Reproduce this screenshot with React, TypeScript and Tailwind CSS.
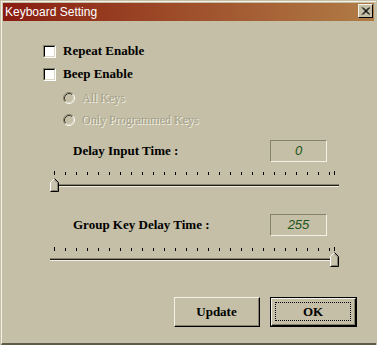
import React from "react";

const serif = "font-['Liberation_Serif','Times_New_Roman',serif]";

function CheckBox() {
  return (
    <span className="flex h-[13px] w-[13px] border border-t-[#85826e] border-l-[#85826e] border-b-white border-r-white">
      <span className="flex-1 bg-white border border-t-black border-l-black border-b-[#dcd8c4] border-r-[#dcd8c4]" />
    </span>
  );
}

function Radio() {
  return (
    <svg width="12" height="12" viewBox="0 0 12 12">
      <circle cx="6" cy="6" r="5" fill="#c4bfa6" />
      <path d="M2.11 9.89 A5.5 5.5 0 0 1 9.89 2.11" stroke="#85826e" fill="none" />
      <path d="M9.89 2.11 A5.5 5.5 0 0 1 2.11 9.89" stroke="#ffffff" fill="none" />
      <path d="M2.82 9.18 A4.5 4.5 0 0 1 9.18 2.82" stroke="#3a382c" fill="none" />
      <path d="M9.18 2.82 A4.5 4.5 0 0 1 2.82 9.18" stroke="#dcd8c4" fill="none" />
    </svg>
  );
}

function Thumb({ h }: { h: number }) {
  return (
    <svg width="9" height={h} viewBox={`0 0 9 ${h}`}>
      <polygon points={`0.5,4.5 4.5,0.5 8.5,4.5 8.5,${h - 0.5} 0.5,${h - 0.5}`} fill="#c8c3ac" />
      <path d={`M0.5 ${h - 1} V4.5 L4.5 0.5`} stroke="#ffffff" fill="none" />
      <path d={`M4.5 0.5 L8.5 4.5 V${h - 0.5} H0.5`} stroke="#000000" fill="none" />
      <path d={`M4.5 1.9 L7.5 4.9 V${h - 1.5} H1.5`} stroke="#85826e" fill="none" />
    </svg>
  );
}

function Ticks() {
  const xs = Array.from({ length: 26 }, (_, i) => 4 + Math.round(i * 10.98));
  return (
    <svg width="289" height="4" viewBox="0 0 289 4" className="block">
      {xs.map((x, i) => (
        <line key={x} x1={x + 0.5} x2={x + 0.5} y1={i === 0 ? 0 : 1} y2={4} stroke="#000" />
      ))}
      <line x1={284.5} x2={284.5} y1={0} y2={4} stroke="#000" />
    </svg>
  );
}

function Track() {
  return (
    <div className="flex flex-col">
      <div className="h-[1px] bg-[#85826e]" />
      <div className="h-[1px] bg-[#1e1c14]" />
      <div className="h-[1px] bg-[#f2f0e4]" />
    </div>
  );
}

function Slider({ value, gap, thumbTop, thumbH }: { value: number; gap: string; thumbTop: string; thumbH: number }) {
  return (
    <div className="relative ml-[7px] w-[289px]">
      <Ticks />
      <div className={gap}>
        <Track />
      </div>
      <div className={`absolute ${thumbTop}`} style={{ left: Math.round((value / 255) * 280) }}>
        <Thumb h={thumbH} />
      </div>
    </div>
  );
}

function EditBox({ value }: { value: string }) {
  return (
    <div className="flex h-[22px] w-[57px] items-center justify-center border border-t-[#85826e] border-l-[#85826e] border-b-[#f4f2e6] border-r-[#f4f2e6] font-['Liberation_Sans',Arial,sans-serif] text-[13px] italic text-[#1d5418]">
      {value}
    </div>
  );
}

function Button({ label, isDefault }: { label: string; isDefault?: boolean }) {
  const face = (
    <div className="flex h-full w-full border border-t-[#f4f2e6] border-l-[#f4f2e6] border-b-black border-r-black">
      <div className="flex flex-1 border-b border-r border-[#85826e] p-[3px]">
        <div
          className={`flex flex-1 items-center justify-center ${serif} text-[13px] font-bold text-black ${
            isDefault ? "border border-dotted border-black" : ""
          }`}
        >
          {label}
        </div>
      </div>
    </div>
  );
  if (isDefault) {
    return <div className="flex h-[30px] w-[87px] border border-black">{face}</div>;
  }
  return <div className="flex h-[30px] w-[86px]">{face}</div>;
}

export default function App() {
  return (
    <div className="flex h-[345px] w-[377px] flex-col bg-[#c4bfa6] p-[1px] pb-0">
      <div className="flex flex-1 flex-col border-l border-t border-[#f4f2e6] border-b-2 border-b-[#5e5b49] pl-[1px] pt-[1px] pr-[2px]">
        {/* barre de titre */}
        <div className="flex h-[18px] items-center justify-between bg-linear-to-r from-[#891a10] to-[#b07c46] pl-[2px]">
          <span className="font-['Liberation_Sans',Arial,sans-serif] text-[12px] text-white">Keyboard Setting</span>
          <div className="mr-[1px] flex h-[14px] w-[15px] items-center justify-center self-start mt-[1px] bg-[#c4bfa6] border border-t-[#f4f2e6] border-l-[#f4f2e6] border-b-black border-r-black">
            <svg width="9" height="8" viewBox="0 0 9 8">
              <path d="M1 0.5 L8 7.5 M2 0.5 L9 7.5 M8 0.5 L1 7.5 M9 0.5 L2 7.5" stroke="#000" strokeWidth="1" />
            </svg>
          </div>
        </div>

        <div className="flex flex-col pl-[40px]">
          <label className="mt-[22px] flex h-[16px] items-center gap-[7px]">
            <CheckBox />
            <span className={`${serif} text-[13px] font-bold text-black`}>Repeat Enable</span>
          </label>
          <label className="mt-[7px] flex h-[16px] items-center gap-[7px]">
            <CheckBox />
            <span className={`${serif} text-[13px] font-bold text-black`}>Beep Enable</span>
          </label>

          <div className="mt-[8px] flex h-[16px] items-center gap-[7px] pl-[20px]">
            <Radio />
            <span className={`${serif} text-[12px] text-[#a29e88] [text-shadow:1px_1px_0_#f4f2e6]`}>All Keys</span>
          </div>
          <div className="mt-[6px] flex h-[16px] items-center gap-[7px] pl-[20px]">
            <Radio />
            <span className={`${serif} text-[12px] text-[#a29e88] [text-shadow:1px_1px_0_#f4f2e6]`}>
              Only Programmed Keys
            </span>
          </div>

          <div className="ml-[30px] mt-[12px] flex w-[254px] items-center justify-between">
            <span className={`${serif} text-[13px] font-bold text-black`}>Delay Input Time :</span>
            <EditBox value="0" />
          </div>
          <div className="mt-[9px]">
            <Slider value={0} gap="mt-[9px]" thumbTop="top-[7px]" thumbH={14} />
          </div>

          <div className="ml-[30px] mt-[27px] flex w-[254px] items-center justify-between">
            <span className={`${serif} text-[13px] font-bold text-black`}>Group Key Delay Time :</span>
            <EditBox value="255" />
          </div>
          <div className="mt-[11px]">
            <Slider value={255} gap="mt-[7px]" thumbTop="top-[5px]" thumbH={15} />
          </div>

          <div className="ml-[131px] mt-[36px] flex gap-[10px]">
            <Button label="Update" />
            <Button label="OK" isDefault />
          </div>
        </div>
      </div>
    </div>
  );
}
